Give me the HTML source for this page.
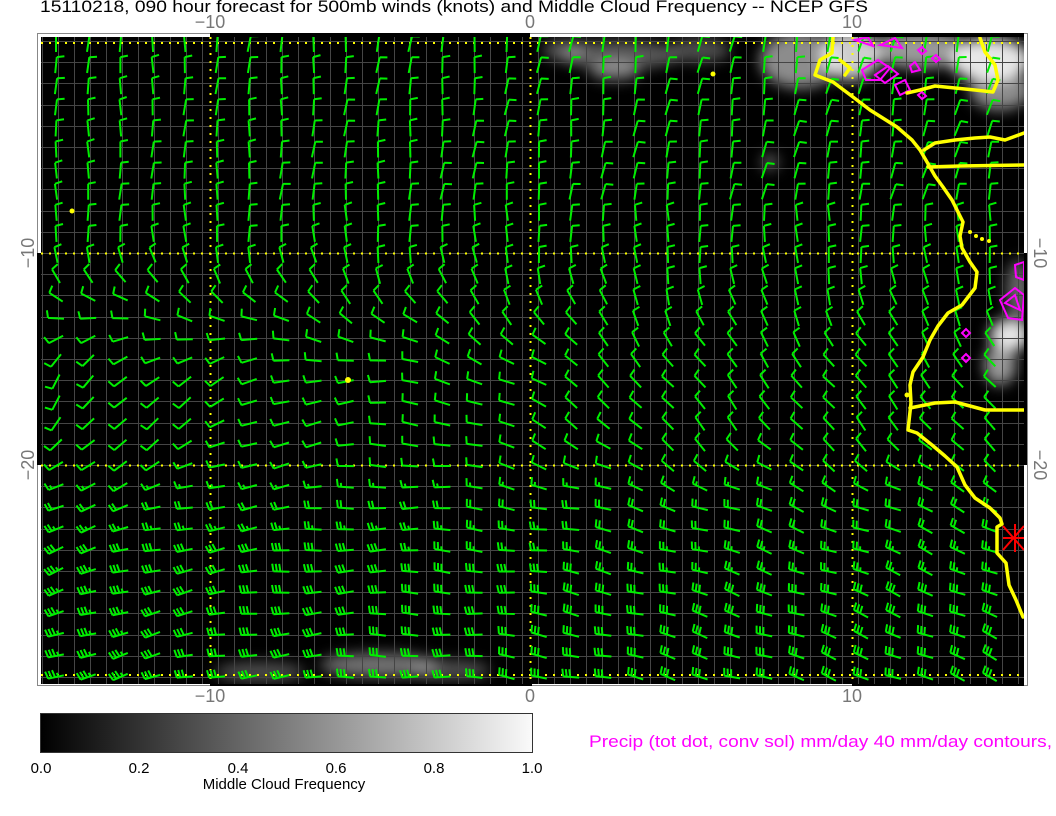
<!DOCTYPE html>
<html><head><meta charset="utf-8"><style>
html,body{margin:0;padding:0;background:#fff;width:1056px;height:816px;overflow:hidden}
svg{display:block}
text{font-family:"Liberation Sans",sans-serif}
</style></head><body>
<svg id="s" width="1056" height="816" viewBox="0 0 1056 816" xmlns="http://www.w3.org/2000/svg">
<defs>
<filter id="bl" x="-50%" y="-50%" width="200%" height="200%"><feGaussianBlur stdDeviation="7"/></filter>
<clipPath id="cp"><rect x="41" y="37" width="983" height="647"/></clipPath>
<linearGradient id="cb" x1="0" x2="1" y1="0" y2="0"><stop offset="0" stop-color="#000"/><stop offset="1" stop-color="#fafafa"/></linearGradient>
</defs>
<text x="40" y="12" font-size="17" textLength="828" lengthAdjust="spacingAndGlyphs">15110218, 090 hour forecast for 500mb winds (knots) and Middle Cloud Frequency -- NCEP GFS</text>
<rect x="37.5" y="33.5" width="990" height="652" fill="#fff" stroke="#888" stroke-width="1"/>
<rect x="210" y="33" width="320" height="4" fill="#000"/>
<rect x="852" y="33" width="172" height="4" fill="#000"/>
<rect x="210" y="684" width="322" height="2" fill="#000"/>
<rect x="852" y="684" width="172" height="2" fill="#000"/>
<rect x="37" y="253" width="4" height="212" fill="#000"/>
<rect x="1024" y="253" width="3" height="212" fill="#000"/>
<rect x="41" y="37" width="983" height="647" fill="#000"/>
<g clip-path="url(#cp)">
<g filter="url(#bl)" fill="#fff">
<ellipse cx="620" cy="55" rx="60" ry="14" opacity=".35"/>
<ellipse cx="615" cy="70" rx="25" ry="10" opacity=".45"/>
<ellipse cx="700" cy="50" rx="30" ry="12" opacity=".3"/>
<ellipse cx="565" cy="50" rx="22" ry="10" opacity=".35"/>
<ellipse cx="800" cy="60" rx="40" ry="28" opacity=".55"/>
<ellipse cx="850" cy="55" rx="30" ry="25" opacity=".8"/>
<ellipse cx="920" cy="50" rx="50" ry="18" opacity=".6"/>
<ellipse cx="990" cy="60" rx="40" ry="22" opacity=".9"/>
<ellipse cx="1000" cy="90" rx="30" ry="20" opacity=".55"/>
<ellipse cx="770" cy="162" rx="8" ry="8" opacity=".4"/>
<ellipse cx="1018" cy="290" rx="12" ry="30" opacity=".4"/>
<ellipse cx="1010" cy="335" rx="20" ry="16" opacity=".9"/>
<ellipse cx="1000" cy="365" rx="16" ry="20" opacity=".6"/>
<ellipse cx="380" cy="665" rx="60" ry="12" opacity=".45"/>
<ellipse cx="260" cy="672" rx="45" ry="10" opacity=".3"/>
<ellipse cx="450" cy="670" rx="40" ry="10" opacity=".3"/>
</g>
<g id="grid" stroke="#454545" stroke-width="1"></g>
<g stroke="#ff0" stroke-width="2" stroke-dasharray="2 6" fill="none">
<line x1="210.5" y1="37" x2="210.5" y2="684"/>
<line x1="530.5" y1="37" x2="530.5" y2="684"/>
<line x1="852.5" y1="37" x2="852.5" y2="684"/>
<line x1="41" y1="43" x2="1024" y2="43"/>
<line x1="41" y1="253.5" x2="1024" y2="253.5"/>
<line x1="41" y1="465.5" x2="1024" y2="465.5"/>
<line x1="41" y1="675" x2="1024" y2="675"/>
</g>
<path id="barbs" fill="none" stroke="#00ee00" stroke-width="2"/>
<g fill="none" stroke="#f0f" stroke-width="2">
<path d="M862 70 L878 60 L890 68 L880 80 L866 80 Z"/>
<path d="M875 75 L888 66 L898 74 L885 83 Z"/>
<path d="M895 85 L905 80 L910 90 L900 95 Z"/>
<path d="M880 45 L895 38 L902 48 Z"/>
<path d="M910 66 L915 62 L920 70 L912 72 Z"/>
<path d="M855 40 L868 37 L873 46 Z"/>
<path d="M918 95 L922 92 L926 96 L922 99 Z"/>
<path d="M1000 300 L1015 288 L1024 295 L1022 320 L1008 318 Z"/>
<path d="M1005 303 L1015 295 L1020 310 Z"/>
<path d="M1015 265 L1024 262 L1024 280 L1016 277 Z"/>
<path d="M962 333 L966 329 L970 333 L966 337 Z"/>
<path d="M962 358 L966 354 L970 358 L966 362 Z"/>
<path d="M932 58 L936 55 L940 59 L936 62 Z"/>
<path d="M918 50 L922 47 L926 51 L922 54 Z"/>
</g>
<g fill="none" stroke="#ff0" stroke-width="3.5" stroke-linejoin="round" stroke-linecap="round">
<path d="M833 37 L832 53 L820 60 L815 75 L833 82 L853 97 L870 110 L897 127 L912 140 L920 150 L927 162 L935 176 L943 187 L952 200 L957 210 L963 222 L960 236 L962 248 L970 262 L977 272 L975 288 L962 305 L948 313 L938 326 L930 340 L923 357 L913 372 L910 385 L911 403 L908 430 L917 433 L932 445 L945 456 L957 467 L965 485 L975 498 L990 508 L1000 518 L1002 524 L997 527 L997 553 L1006 563 L1009 585 L1016 600 L1023 617"/>
<path d="M907 93 L920 90 L935 86 L955 88 L975 90 L993 92 L998 80 L995 65 L985 52 L980 38"/>
<path d="M924 150 L935 143 L955 140 L975 138 L990 137 L1005 140 L1024 133"/>
<path d="M928 167 L960 166 L1024 165"/>
<path d="M910 408 L935 403 L955 402 L985 410 L1024 410"/>
<path d="M840 60 L850 68 L845 75"/>
</g>
<g fill="#ff0">
<circle cx="713" cy="74" r="2.5"/><circle cx="72" cy="211" r="2.5"/><circle cx="348" cy="380" r="3"/>
<circle cx="970" cy="232" r="2"/><circle cx="976" cy="236" r="2"/><circle cx="982" cy="239" r="2"/><circle cx="989" cy="241" r="2"/>
<circle cx="907" cy="395" r="2.5"/>
</g>
<g stroke="#f00" stroke-width="2">
<line x1="1015" y1="524" x2="1015" y2="552"/><line x1="1003" y1="538" x2="1024" y2="538"/>
<line x1="1003" y1="526" x2="1024" y2="550"/><line x1="1003" y1="550" x2="1024" y2="526"/>
</g>
</g>
<g fill="#777" font-size="18" text-anchor="middle">
<text x="210" y="28">−10</text><text x="530" y="28">0</text><text x="852" y="28">10</text>
<text x="210" y="702">−10</text><text x="530" y="702">0</text><text x="852" y="702">10</text>
<text transform="translate(34,253) rotate(-90)">−10</text>
<text transform="translate(34,465) rotate(-90)">−20</text>
<text transform="translate(1034,253) rotate(90)">−10</text>
<text transform="translate(1034,465) rotate(90)">−20</text>
</g>
<rect x="40.5" y="713.5" width="492" height="39" fill="url(#cb)" stroke="#333" stroke-width="1"/>
<g font-size="15" text-anchor="middle" fill="#000">
<text x="41" y="773">0.0</text><text x="139" y="773">0.2</text><text x="238" y="773">0.4</text>
<text x="336" y="773">0.6</text><text x="434" y="773">0.8</text><text x="532" y="773">1.0</text>
<text x="284" y="789" font-size="15">Middle Cloud Frequency</text>
</g>
<text x="589" y="747" font-size="17" fill="#f0f" textLength="463" lengthAdjust="spacingAndGlyphs">Precip (tot dot, conv sol) mm/day 40 mm/day contours,</text>
</svg>
<script>
(function(){
var g=document.getElementById('grid'),s='';
for(var x=42;x<1024;x+=16){s+='<line x1="'+(x+.5)+'" y1="37" x2="'+(x+.5)+'" y2="684"/>';}
for(var y=253-21.2*10;y<684;y+=21.2){var yy=Math.round(y)+.5;s+='<line x1="41" y1="'+yy+'" x2="1024" y2="'+yy+'"/>';}
g.innerHTML=s;
function cl(v){return v<0?0:v>1?1:v;}
function sm(a,b,v){var t=cl((v-a)/(b-a));return t*t*(3-2*t);}
var d='';
for(var i=0;i<31;i++){for(var j=0;j<31;j++){
 var cx=56+32.2*i, cy=44+21.1*j; if(cx>1016)continue;
 var nx=(cx-40)/985, ny=(cy-37)/647;
 var L=cl(1-nx*1.6);
 var t1=sm(0.28,0.55,ny);
 var th=-90-t1*(40+110*L);
 var b=sm(0.58,0.75,ny);
 var thb=-180-20*L+25*nx;
 th=th*(1-b)+thb*b+Math.sin(i*1.3+j*0.7)*8;
 if(ny<0.25) th+= nx*15;
 var sp=10+20*sm(0.6,0.85,ny)+6*L*sm(0.6,0.8,ny);
 var r=th*Math.PI/180, dx=Math.cos(r), dy=Math.sin(r), px=-dy, py=dx, Ls=16;
 var sx=cx-0.5*Ls*dx, sy=cy-0.5*Ls*dy, tx=sx+Ls*dx, ty=sy+Ls*dy;
 d+='M'+sx.toFixed(1)+' '+sy.toFixed(1)+'L'+tx.toFixed(1)+' '+ty.toFixed(1);
 var full=Math.floor(sp/10), half=(sp%10)>=5?1:0, k=0;
 for(var f=0;f<full;f++,k++){var bx=tx-k*3.5*dx,by=ty-k*3.5*dy;
  d+='M'+bx.toFixed(1)+' '+by.toFixed(1)+'L'+(bx+7.5*px+1.5*dx).toFixed(1)+' '+(by+7.5*py+1.5*dy).toFixed(1);}
 if(half){var bx=tx-k*3.5*dx,by=ty-k*3.5*dy;
  d+='M'+bx.toFixed(1)+' '+by.toFixed(1)+'L'+(bx+3.8*px+.8*dx).toFixed(1)+' '+(by+3.8*py+.8*dy).toFixed(1);}
}}
document.getElementById('barbs').setAttribute('d',d);
})();
</script>
</body></html>
